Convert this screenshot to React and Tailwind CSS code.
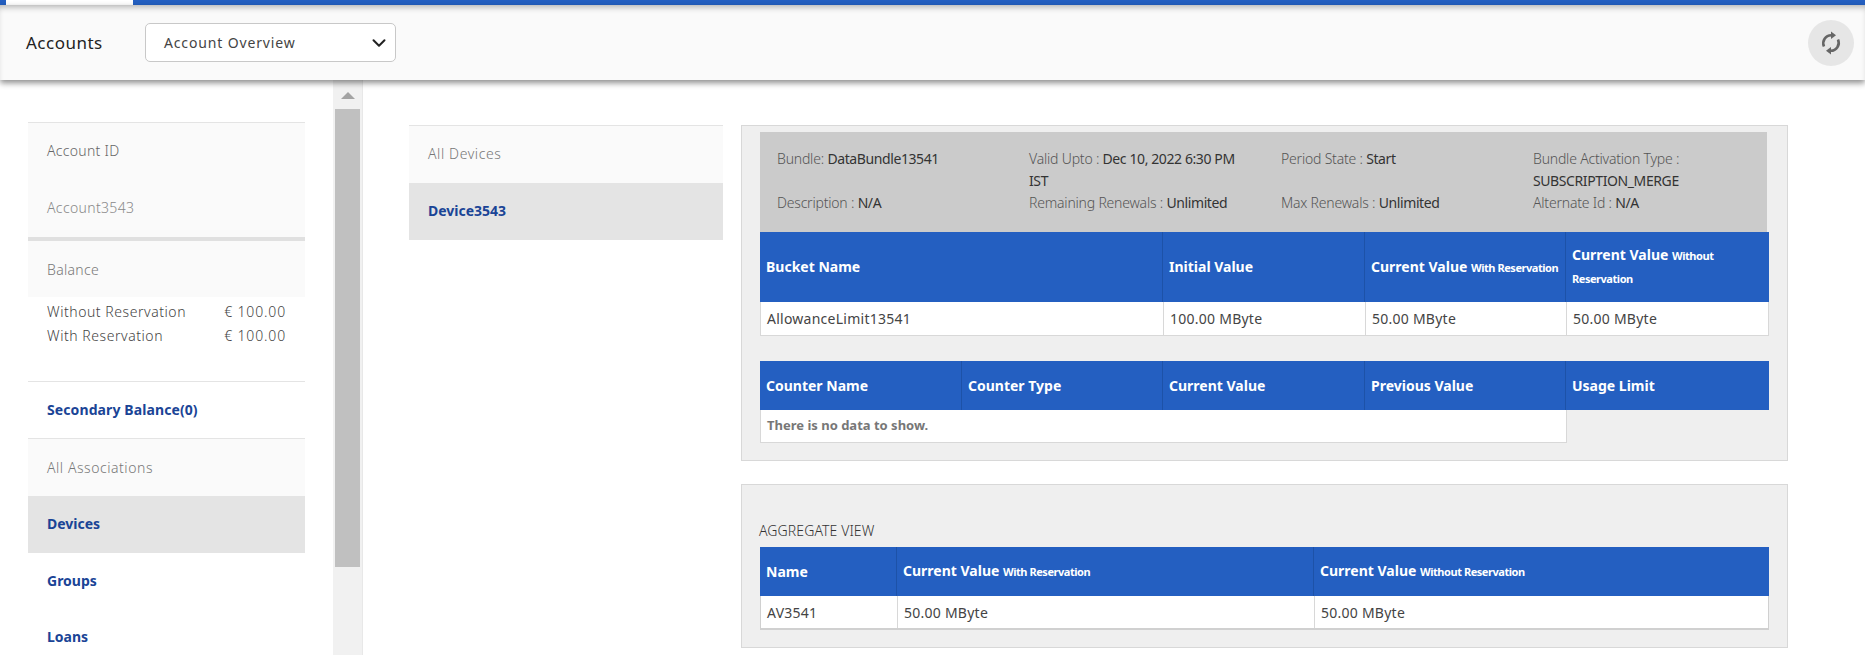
import { ChevronDown } from "lucide-react"

function Info({ label, value }) {
  return (
    <div className="font-light tracking-[-0.2px] text-[#555]">
      {label} <span className="font-normal tracking-[-0.4px] text-[#333]">{value}</span>
    </div>
  )
}

function Sub({ children }) {
  return <span className="text-[11px] tracking-[-0.45px]">{children}</span>
}

function HeadRow({ cols, children }) {
  return <div className={`grid ${cols} bg-[#245fc1] font-bold text-white text-[14px] leading-[22px]`}>{children}</div>
}

function Th({ children, last }) {
  return (
    <div className={`flex items-center pl-[6px] pr-[2px] ${last ? "" : "border-r border-[#1d52a8]"}`}>
      <div>{children}</div>
    </div>
  )
}

function Td({ children, last }) {
  return (
    <div className={`flex items-center px-[6px] tracking-[0.25px] ${last ? "" : "border-r border-[#d8d8d8]"}`}>{children}</div>
  )
}

export default function App() {
  return (
    <div className="h-[655px] w-[1865px] overflow-hidden bg-white font-['Noto_Sans',sans-serif] text-[14px] text-[#333]">
      {/* top strip */}
      <div className="flex h-[5px] bg-[#245fc1] pl-[6px]">
        <div className="w-[127px] bg-white"></div>
      </div>

      {/* header */}
      <div className="relative z-10 flex h-[75px] items-center justify-between bg-[#fafafa] pl-[26px] pr-[11px] shadow-[0_3px_6px_rgba(0,0,0,0.45),inset_0_5px_6px_-3px_rgba(0,0,0,0.3)]">
        <div className="flex items-center">
          <div className="w-[119px] text-[17px] tracking-[0.5px] text-[#222]">Accounts</div>
          <div className="flex h-[39px] w-[251px] items-center justify-between rounded-[5px] border border-[#c8c8c8] bg-white pl-[18px] pr-[5px] text-[14px] tracking-[0.85px] text-[#444]">
            <span>Account Overview</span>
            <ChevronDown className="h-[22px] w-[22px] text-[#222]" strokeWidth={2.2} />
          </div>
        </div>
        <div className="flex h-[46px] w-[46px] items-center justify-center rounded-full bg-[#e6e6e6]">
          <svg viewBox="0 0 24 24" className="h-[24px] w-[24px]" fill="none">
            <path d="M5 15.5 A8 8 0 0 1 12.5 4.2" stroke="#666" strokeWidth="2.6" />
            <path d="M12 0.5 L17 4.3 L12 8 Z" fill="#666" />
            <path d="M19 8.5 A8 8 0 0 1 11.5 19.8" stroke="#666" strokeWidth="2.6" />
            <path d="M12 16 L7 19.7 L12 23.5 Z" fill="#666" />
          </svg>
        </div>
      </div>

      <div className="flex h-[575px]">
        {/* left column */}
        <div className="ml-[28px] w-[277px] pt-[42px] text-[14px]">
          <div className="h-[115px] border-t border-[#e4e4e4] bg-[#fafafa] px-[19px] pt-[17px] font-light text-[#666]">
            <div className="text-[14px] font-light tracking-[0.3px] text-[#666]">Account ID</div>
            <div className="mt-[36px] tracking-[0.35px] text-[#888]">Account3543</div>
          </div>
          <div className="h-[4px] bg-[#e0e0e0]"></div>
          <div className="flex h-[56px] items-center bg-[#fafafa] px-[19px] font-light tracking-[0.3px] text-[#777]">Balance</div>
          <div className="h-[84px] px-[19px] pt-[3px] font-light leading-[24px] tracking-[0.55px] text-[#444]">
            <div className="flex justify-between"><span>Without Reservation</span><span className="tracking-[0.85px]">€ 100.00</span></div>
            <div className="flex justify-between"><span>With Reservation</span><span className="tracking-[0.85px]">€ 100.00</span></div>
          </div>
          <div className="flex h-[57px] items-center border-t border-[#e4e4e4] px-[19px] pb-[2px] font-bold tracking-[0.1px] text-[#1a4496]">Secondary Balance(0)</div>
          <div className="flex h-[58px] items-center border-t border-[#e4e4e4] bg-[#fafafa] px-[19px] font-light tracking-[0.55px] text-[#777]">All Associations</div>
          <div className="flex h-[57px] items-center bg-[#e4e4e4] px-[19px] pb-[2px] font-bold text-[#1a4496]">Devices</div>
          <div className="flex h-[57px] items-center px-[19px] pb-[2px] font-bold text-[#1a4496]">Groups</div>
          <div className="flex h-[56px] items-center px-[19px] pb-[4px] font-bold text-[#1a4496]">Loans</div>
        </div>

        {/* scrollbar */}
        <div className="ml-[28px] flex w-[30px] flex-col items-center border-r border-[#e8e8e8] bg-[#f1f1f1]">
          <div className="mt-[12px] h-0 w-0 border-x-[7px] border-b-[7px] border-x-transparent border-b-[#a3a3a3]"></div>
          <div className="mt-[10px] h-[458px] w-[25px] bg-[#c0c0c0]"></div>
        </div>

        {/* device list */}
        <div className="ml-[46px] w-[314px] pt-[45px]">
          <div className="flex h-[58px] items-center border-t border-[#e4e4e4] bg-[#fafafa] px-[19px] pb-[2px] font-light tracking-[0.6px] text-[#777]">All Devices</div>
          <div className="flex h-[57px] items-center bg-[#e4e4e4] px-[19px] pb-[2px] font-bold text-[#1a4496]">Device3543</div>
        </div>

        {/* detail panels */}
        <div className="ml-[18px] w-[1047px] pt-[45px]">
          <div className="h-[336px] border border-[#d8d8d8] bg-[#efefef] pl-[18px] pt-[6px]">
            <div className="grid h-[100px] w-[1007px] grid-cols-[252px_252px_252px_1fr] content-start bg-[#cbcbcb] pl-[17px] pt-[16px] leading-[22px]">
              <div className="w-[230px]"><Info label="Bundle:" value="DataBundle13541" /></div>
              <div className="w-[215px]"><Info label="Valid Upto :" value="Dec 10, 2022 6:30 PM IST" /></div>
              <div className="w-[230px]"><Info label="Period State :" value="Start" /></div>
              <div className="w-[220px]"><Info label="Bundle Activation Type :" value="SUBSCRIPTION_MERGE" /></div>
              <div><Info label="Description :" value="N/A" /></div>
              <div><Info label="Remaining Renewals :" value="Unlimited" /></div>
              <div><Info label="Max Renewals :" value="Unlimited" /></div>
              <div><Info label="Alternate Id :" value="N/A" /></div>
            </div>

            <div className="w-[1009px]">
              <HeadRow cols="grid-cols-[403px_202px_201px_203px] h-[70px]">
                <Th>Bucket Name</Th>
                <Th>Initial Value</Th>
                <Th>Current Value <Sub>With Reservation</Sub></Th>
                <Th last>Current Value <Sub>Without Reservation</Sub></Th>
              </HeadRow>
              <div className="grid h-[34px] grid-cols-[403px_202px_201px_203px] border-x border-b border-[#d8d8d8] bg-white text-[#444]">
                <Td>AllowanceLimit13541</Td>
                <Td>100.00 MByte</Td>
                <Td>50.00 MByte</Td>
                <Td last>50.00 MByte</Td>
              </div>
            </div>

            <div className="mt-[25px] w-[1009px]">
              <HeadRow cols="grid-cols-[202px_201px_202px_201px_203px] h-[49px]">
                <Th>Counter Name</Th>
                <Th>Counter Type</Th>
                <Th>Current Value</Th>
                <Th>Previous Value</Th>
                <Th last>Usage Limit</Th>
              </HeadRow>
              <div className="flex h-[33px] w-[807px] items-center border-x border-b border-[#d8d8d8] bg-white px-[6px] text-[13px] font-bold text-[#777]">
                There is no data to show.
              </div>
            </div>
          </div>

          <div className="mt-[23px] h-[164px] border border-[#d8d8d8] bg-[#efefef] pl-[18px] pt-[34px]">
            <div className="-ml-[1px] h-[28px] text-[14px] font-light leading-[24px] tracking-[0.1px] text-[#333]">AGGREGATE VIEW</div>
            <div className="w-[1009px]">
              <HeadRow cols="grid-cols-[137px_417px_455px] h-[49px]">
                <Th>Name</Th>
                <Th>Current Value <Sub>With Reservation</Sub></Th>
                <Th last>Current Value <Sub>Without Reservation</Sub></Th>
              </HeadRow>
              <div className="grid h-[34px] grid-cols-[137px_417px_455px] border-x border-b-2 border-[#d0d0d0] bg-white text-[#444]">
                <Td>AV3541</Td>
                <Td>50.00 MByte</Td>
                <Td last>50.00 MByte</Td>
              </div>
            </div>
          </div>
        </div>
      </div>
    </div>
  )
}
